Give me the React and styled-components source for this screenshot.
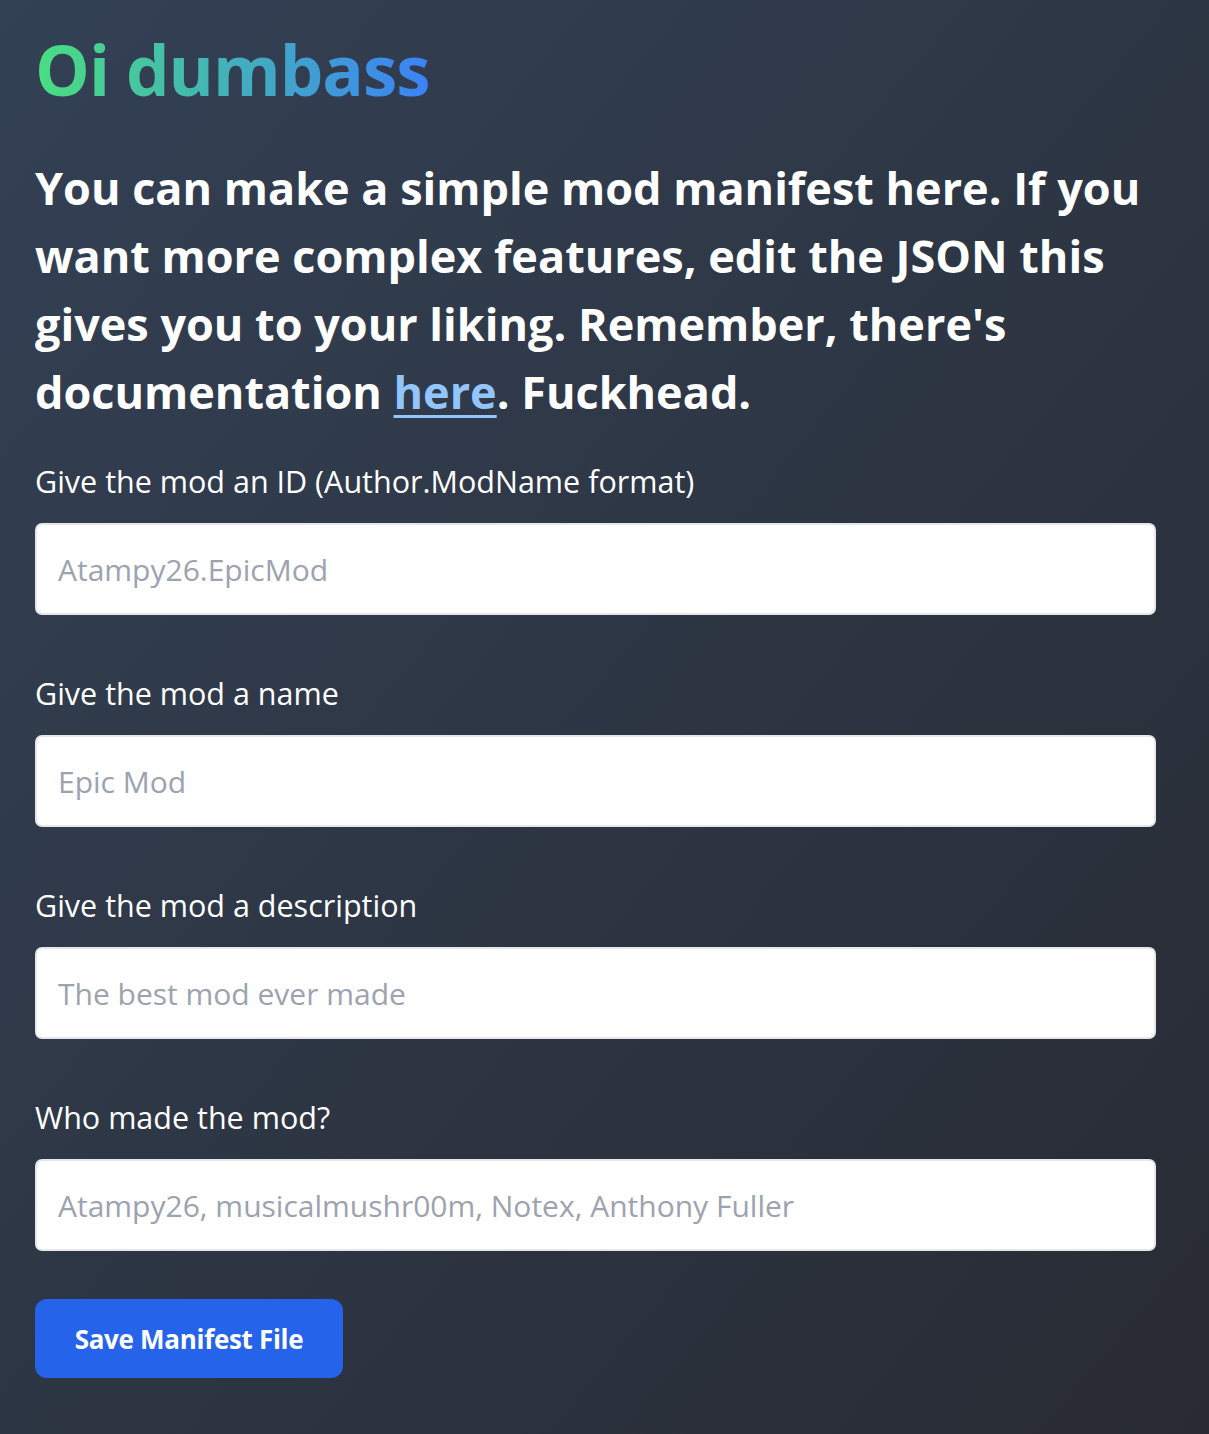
import React, { useState } from 'react';
import styled, { createGlobalStyle } from 'styled-components';

const GlobalStyle = createGlobalStyle`
  html, body {
    margin: 0;
    padding: 0;
  }

  body {
    min-height: 100vh;
    background: linear-gradient(to bottom right, #334155, #282b33);
    font-family: "Open Sans", "Noto Sans", sans-serif;
    color: #ffffff;
  }
`;

const Page = styled.main`
  box-sizing: border-box;
  min-height: 1434px;
  padding: 27px 53px 40px 35px;
`;

const Title = styled.h1`
  display: inline-block;
  margin: 0;
  font-size: 69px;
  line-height: 84px;
  font-weight: 700;
  letter-spacing: -1px;
  background: linear-gradient(to right, #4ade80, #3b82f6);
  -webkit-background-clip: text;
  background-clip: text;
  color: transparent;
`;

const Intro = styled.p`
  margin: 43px 0 0;
  font-size: 45px;
  line-height: 68px;
  font-weight: 700;
`;

const DocLink = styled.a`
  color: #93c5fd;
  text-decoration: underline;
  text-underline-offset: 6px;
  text-decoration-thickness: 3px;
`;

const Form = styled.form`
  display: flex;
  flex-direction: column;
  gap: 58px;
  margin-top: 35px;
`;

const Field = styled.div`
  display: flex;
  flex-direction: column;
  gap: 22px;
`;

const Label = styled.label`
  font-size: 30.5px;
  line-height: 40px;
  font-weight: 400;
`;

const Input = styled.input`
  box-sizing: border-box;
  width: 100%;
  height: 92px;
  padding: 0 21px;
  border: 2px solid #e5e7eb;
  border-radius: 7px;
  background: #ffffff;
  font-family: inherit;
  font-size: 30px;
  color: #111827;
  outline: none;

  &::placeholder {
    color: #9ca3af;
  }
`;

const SaveButton = styled.button`
  align-self: flex-start;
  width: 308px;
  height: 79px;
  margin-top: -10px;
  border: none;
  border-radius: 12px;
  background: #2563eb;
  color: #ffffff;
  font-family: inherit;
  font-size: 26px;
  font-weight: 700;
  letter-spacing: -0.3px;
  cursor: pointer;
`;

const fields = [
  { id: 'modId', label: 'Give the mod an ID (Author.ModName format)', placeholder: 'Atampy26.EpicMod' },
  { id: 'modName', label: 'Give the mod a name', placeholder: 'Epic Mod' },
  { id: 'modDescription', label: 'Give the mod a description', placeholder: 'The best mod ever made' },
  { id: 'modAuthors', label: 'Who made the mod?', placeholder: 'Atampy26, musicalmushr00m, Notex, Anthony Fuller' },
];

const App = () => {
  const [values, setValues] = useState({});

  const handleChange = (id) => (e) => {
    setValues({ ...values, [id]: e.currentTarget.value });
  };

  return (
    <>
      <GlobalStyle />
      <Page>
        <Title>Oi dumbass</Title>
        <Intro>
          You can make a simple mod manifest here. If you want more complex features, edit the JSON this
          gives you to your liking. Remember, there's documentation <DocLink href="#">here</DocLink>. Fuckhead.
        </Intro>
        <Form onSubmit={(e) => e.preventDefault()}>
          {fields.map((f) => (
            <Field key={f.id}>
              <Label htmlFor={f.id}>{f.label}</Label>
              <Input
                id={f.id}
                type="text"
                placeholder={f.placeholder}
                value={values[f.id] || ''}
                onChange={handleChange(f.id)}
              />
            </Field>
          ))}
          <SaveButton type="submit">Save Manifest File</SaveButton>
        </Form>
      </Page>
    </>
  );
};

export default App;
